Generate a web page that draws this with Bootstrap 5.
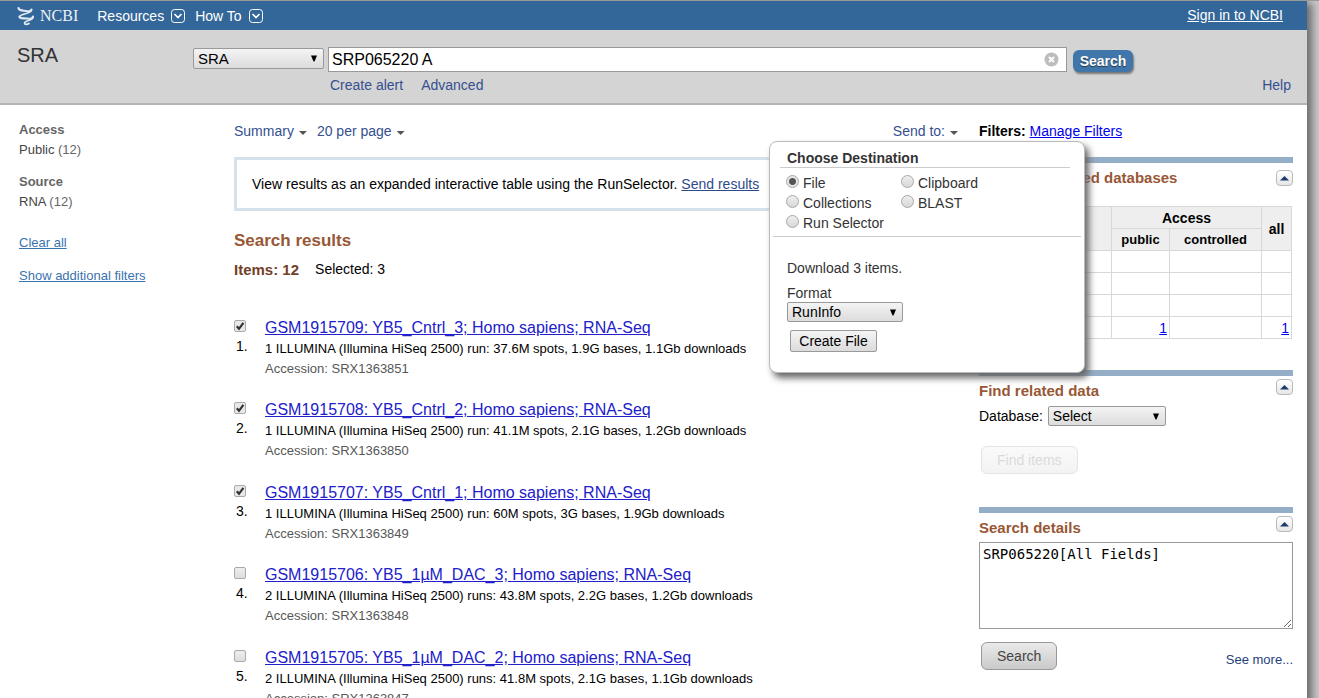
<!DOCTYPE html>
<html lang="en">
<head>
<meta charset="utf-8">
<meta name="viewport" content="width=device-width, initial-scale=1">
<title>SRP065220 A - SRA - NCBI</title>
<link href="https://cdn.jsdelivr.net/npm/bootstrap@5.3.0/dist/css/bootstrap.min.css" rel="stylesheet">
<style>
  body { background: #c8c8c8; border-top: 1px solid #999; font: 14px/20px "Liberation Sans", Arial, sans-serif; color: #000; height: 100vh; overflow: hidden; }
  .page { background: #fff; margin-right: 12px; min-height: 100%; box-shadow: 2px 5px 8px 3px #6a6a6a; }
  .topbar { background: #336699; height: 29px; padding: 0 24px 0 17px; color: #fff; }
  .topbar a, .topbar button { color: #fff; }
  .topbar a.brand { font: 16px/20px "Liberation Serif", serif; gap: 5px; color: #eef3f8; margin-right: 19px; }
  .topbar .signin { margin-top: -2px; }
  .plain { border: 0; background: none; padding: 0; color: inherit; font: inherit; }
  .topbar .plain { margin-right: 9px; }
  .topbar .plain svg { margin-left: 6px; }
  .searchband { background: #d4d4d4; height: 75px; padding: 0 16px 0 17px; border-bottom: 2px solid #b4b4b4; }
  .dbname { font-size: 20px; line-height: 24px; width: 176px; padding-top: 13px; color: #333; font-weight: 400; margin: 0; }
  .searchband a, .toolbar > button { color: #345090; text-decoration: none; }
  .searchrow { gap: 6px; margin-top: 17px; }
  .endgap { width: 152px; }
  .sublinks { margin-top: 3px; padding-left: 2px; gap: 18px; }
  .pick { appearance: none; border: 1px solid #999; border-radius: 2px; color: #000; padding: 0 5px 0 4px; height: 20px; font: 14px/18px "Liberation Sans", Arial, sans-serif;
    background: url("data:image/svg+xml,%3Csvg xmlns='http://www.w3.org/2000/svg' width='8' height='7'%3E%3Cpath d='M1 .5h6L4.500 6.500h-1z'/%3E%3C/svg%3E") no-repeat right 5px center, linear-gradient(#f4f4f4, #dcdcdc); }
  .pick-top { width: 131px; height: 21px; font-size: 15px; margin-top: 18px; }
  .term { height: 25px; border: 1px solid #999; border-radius: 0; padding: 0 28px 0 3px; font: 16px/20px "Liberation Sans", Arial, sans-serif; color: #000; }
  .clear { right: 8px; top: 5px; line-height: 0; }
  .go { background: #4076aa; color: #fff; font: bold 14px/20px "Liberation Sans", Arial, sans-serif; border: 0; border-radius: 6px; padding: 0; width: 60px; height: 22px; margin-top: 3px; box-shadow: 1px 2px 2px #777; text-shadow: 0 1px 1px #234; }
  .body-row { padding: 0 14px 0 17px; }
  .filters { width: 217px; padding: 15px 0 0 2px; font-size: 13px; color: #666; }
  .filters h2 { font-size: 13px; line-height: 20px; font-weight: 700; margin: 0; color: #666; }
  .filters ul { margin: 0 0 12px; }
  .filters ul a { color: #444; text-decoration: none; }
  .filters > a { color: #3b73af; display: block; }
  .filters > .first { margin-top: 21px; }
  .filters > .more { margin-top: 13px; }
  .maincol { padding-top: 16px; min-width: 0; }
  .toolbar { gap: 10px; }
  .caret { width: 8px; height: 4px; background: #555; clip-path: polygon(0 0, 100% 0, 50% 100%); margin: 4px 0 0 5px; }
  .notice { border: 3px solid #d6e2eb; margin: 16px -1px 0 0; padding: 14px 15px; white-space: nowrap; overflow: hidden; height: 54px; }
  .notice a { color: #2f4a8b; }
  .brown { color: #985735; font-weight: 700; margin: 0; }
  .brown-lg { font-size: 17px; line-height: 22px; margin-top: 19px; }
  .counts { margin-top: 7px; }
  .items { color: #724128; font-size: 15px; line-height: 22px; font-weight: 700; margin: 0 16px 0 0; }
  .hits { margin-top: 35px; }
  .hit { gap: 16px; margin-bottom: 19px; font-size: 13px; }
  .hit:nth-child(even) { margin-bottom: 20px; }
  .pos { width: 15px; padding-top: 4px; }
  .pos label { font-size: 14px; margin-top: 4px; padding-left: 2px; }
  .hit a { font-size: 16px; line-height: 23px; color: #2120cb; display: block; }
  .acc { color: #575757; }
  .tick.form-check-input { width: 12px; height: 12px; margin: 0; border: 1px solid #aaa; border-radius: 2px; background: linear-gradient(#eee, #ddd); float: none; display: block; }
  .tick.form-check-input:checked { background: url("data:image/svg+xml,%3Csvg xmlns='http://www.w3.org/2000/svg' width='10' height='10'%3E%3Cpath d='M1.800 5.200 4 7.800 8.400 1.800' fill='none' stroke='%23333' stroke-width='2.200'/%3E%3C/svg%3E") center no-repeat, #e8e8e8; }
  .dot.form-check-input { width: 13px; height: 13px; margin: 2px 4px 0 0; border: 1px solid #a8a8a8; background: linear-gradient(#eee, #d8d8d8); float: none; flex: none; }
  .dot.form-check-input:checked { background: radial-gradient(circle, #555 0 3px, #e6e6e6 4px); }
  .sendbox { width: 316px; height: 232px; right: -127px; top: 20px; background: #fff; border: 1px solid #bbb; border-radius: 8px; box-shadow: 4px 5px 7px #666; z-index: 5; color: #333; }
  .sendbox h3 { font-size: 14px; line-height: 20px; font-weight: 700; margin: 6px 14px 0 10px; padding: 0 7px 0; height: 20px; border-bottom: 1px solid #ccc; }
  .dest { display: grid; grid-template-columns: 115px 1fr; align-content: start; padding: 5px 16px 0 13px; height: 69px; border-bottom: 1px solid #ccc; margin: 0 3px; }
  .choices { padding: 21px 17px 0; }
  .choices p { margin: 0 0 5px; }
  #format { width: 116px; margin-top: -1px; }
  .make { border: 1px solid #999; border-radius: 2px; background: linear-gradient(#f4f4f4, #dcdcdc); color: #000; padding: 0; width: 87px; height: 22px; margin: 8px 0 0 3px; }
  .rightcol { width: 314px; padding-top: 16px; margin-left: 21px; flex: none; }
  .manage { color: #0000ee; }
  .portlet { border-top: 6px solid #94aec7; padding-top: 3px; }
  .portlet h2 { font-size: 15px; line-height: 20px; padding-top: 2px; }
  .fold { width: 17px; height: 16px; border: 1px solid #bbb; border-radius: 4px; background: linear-gradient(#fff, #e6e6e6); padding: 0; line-height: 0; }
  .links { width: 313px; table-layout: fixed; border-collapse: collapse; margin: 18px 0 31px; }
  .links th, .links td { border: 1px solid #d8d8d8; height: 22px; padding: 0 2px; line-height: 20px; }
  .links th { background: #eee; text-align: center; font-weight: 700; }
  .links .sub th { font-size: 13px; }
  .links td { text-align: right; }
  .related { margin-top: 5px; gap: 5px; }
  #reldb { width: 118px; }
  .soft { border: 1px solid #999; border-radius: 6px; background: linear-gradient(#eaeaea, #cacaca); color: #444; height: 28px; padding: 0 15px; margin-left: 2px; }
  .soft:disabled { border-color: #e4e4e4; background: linear-gradient(#fafafa, #f3f3f3); color: #dadada; }
  .find { margin: 20px 0 33px 2px; }
  .query { height: 87px; border: 1px solid #999; border-radius: 0; padding: 3px; font: 14px/17px "DejaVu Sans Mono", monospace; color: #000; display: block; width: 100%; margin-top: 4px; }
  .actions { margin-top: 13px; }
  .see { font-size: 13px; color: #1f3f7a; text-decoration: none; }
</style>
<script src="https://cdn.jsdelivr.net/npm/bootstrap@5.3.0/dist/js/bootstrap.bundle.min.js"></script>
</head>
<body>
<div class="page">
  <header>
    <nav class="topbar d-flex align-items-center">
      <a class="brand d-flex align-items-center text-decoration-none" href="#">
        <svg width="18" height="20" viewBox="0 0 18 20" fill="none" stroke="#dfe9f2" stroke-linecap="round"><path d="M1.500 2C2 5 6 4.500 9 5s5 .8 5.500-1.500" stroke-width="2.200"/><path d="M14.500 4C14.500 8 3 7.500 2.500 11" stroke-width="1.500"/><path d="M2.500 10.500C2.500 13 6 12 10 12.500s5.500.5 6-2" stroke-width="2.200"/><path d="M16 11c0 4-8 3-8.500 6 0 2 3 1.500 4.500.5" stroke-width="1.700"/></svg>
        <span>NCBI</span>
      </a>
      <button class="plain d-flex align-items-center" type="button">Resources
        <svg width="16" height="16" viewBox="0 0 16 16" fill="none" stroke="#fff"><rect x="1.500" y="1.500" width="13" height="13" rx="3"/><path d="m4.500 6 3.500 3.500L11.500 6" stroke-width="1.600"/></svg></button>
      <button class="plain d-flex align-items-center" type="button">How To
        <svg width="16" height="16" viewBox="0 0 16 16" fill="none" stroke="#fff"><rect x="1.500" y="1.500" width="13" height="13" rx="3"/><path d="m4.500 6 3.500 3.500L11.500 6" stroke-width="1.600"/></svg></button>
      <a class="signin ms-auto" href="#">Sign in to NCBI</a>
    </nav>
    <form class="searchband d-flex">
      <h1 class="dbname">SRA</h1>
      <select class="pick pick-top" aria-label="Database to search"><option>SRA</option></select>
      <div class="flex-grow-1 ms-1">
        <div class="searchrow d-flex">
          <div class="position-relative flex-grow-1">
            <input class="term w-100 d-block" type="text" value="SRP065220 A" aria-label="Search term">
            <button class="plain clear position-absolute" type="button" aria-label="Clear"><svg width="15" height="15" viewBox="0 0 15 15"><circle cx="7.500" cy="7.500" r="7" fill="#bdbdbd"/><path d="m5 5 5 5m0-5-5 5" stroke="#fff" stroke-width="2"/></svg></button>
          </div>
          <button class="go" type="submit">Search</button>
          <span class="endgap"></span>
        </div>
        <div class="d-flex sublinks"><a href="#">Create alert</a><a href="#">Advanced</a><a href="#" class="ms-auto">Help</a></div>
      </div>
    </form>
  </header>
  <div class="d-flex body-row">
    <aside class="filters flex-shrink-0">
      <h2>Access</h2>
      <ul class="list-unstyled"><li><a href="#">Public</a> (12)</li></ul>
      <h2>Source</h2>
      <ul class="list-unstyled"><li><a href="#">RNA</a> (12)</li></ul>
      <a class="first" href="#">Clear all</a>
      <a class="more" href="#">Show additional filters</a>
    </aside>
    <main class="maincol flex-grow-1">
      <div class="toolbar d-flex position-relative">
        <button class="plain d-flex align-items-center" type="button">Summary<span class="caret"></span></button>
        <button class="plain d-flex align-items-center" type="button">20 per page<span class="caret"></span></button>
        <button class="plain d-flex align-items-center ms-auto" type="button">Send to: <span class="caret"></span></button>
        <form class="sendbox position-absolute">
          <h3>Choose Destination</h3>
          <div class="dest">
            <label class="d-flex"><input class="form-check-input dot" type="radio" name="dest" checked>File</label>
            <label class="d-flex"><input class="form-check-input dot" type="radio" name="dest">Clipboard</label>
            <label class="d-flex"><input class="form-check-input dot" type="radio" name="dest">Collections</label>
            <label class="d-flex"><input class="form-check-input dot" type="radio" name="dest">BLAST</label>
            <label class="d-flex"><input class="form-check-input dot" type="radio" name="dest">Run Selector</label>
          </div>
          <div class="choices">
            <p>Download 3 items.</p>
            <label class="d-block" for="format">Format</label>
            <select class="pick d-block" id="format"><option>RunInfo</option></select>
            <button class="make" type="button">Create File</button>
          </div>
        </form>
      </div>
      <div class="notice">View results as an expanded interactive table using the RunSelector. <a href="#">Send results</a></div>
      <h2 class="brown brown-lg">Search results</h2>
      <div class="d-flex counts"><h3 class="items">Items: 12</h3><span>Selected: 3</span></div>
      <div class="hits">
        <article class="hit d-flex"><div class="pos"><input class="form-check-input tick" type="checkbox" id="h1" checked><label for="h1">1.</label></div>
          <div><a href="#">GSM1915709: YB5_Cntrl_3; Homo sapiens; RNA-Seq</a><div>1 ILLUMINA (Illumina HiSeq 2500) run: 37.6M spots, 1.9G bases, 1.1Gb downloads</div><div class="acc">Accession: SRX1363851</div></div></article>
        <article class="hit d-flex"><div class="pos"><input class="form-check-input tick" type="checkbox" id="h2" checked><label for="h2">2.</label></div>
          <div><a href="#">GSM1915708: YB5_Cntrl_2; Homo sapiens; RNA-Seq</a><div>1 ILLUMINA (Illumina HiSeq 2500) run: 41.1M spots, 2.1G bases, 1.2Gb downloads</div><div class="acc">Accession: SRX1363850</div></div></article>
        <article class="hit d-flex"><div class="pos"><input class="form-check-input tick" type="checkbox" id="h3" checked><label for="h3">3.</label></div>
          <div><a href="#">GSM1915707: YB5_Cntrl_1; Homo sapiens; RNA-Seq</a><div>1 ILLUMINA (Illumina HiSeq 2500) run: 60M spots, 3G bases, 1.9Gb downloads</div><div class="acc">Accession: SRX1363849</div></div></article>
        <article class="hit d-flex"><div class="pos"><input class="form-check-input tick" type="checkbox" id="h4"><label for="h4">4.</label></div>
          <div><a href="#">GSM1915706: YB5_1µM_DAC_3; Homo sapiens; RNA-Seq</a><div>2 ILLUMINA (Illumina HiSeq 2500) runs: 43.8M spots, 2.2G bases, 1.2Gb downloads</div><div class="acc">Accession: SRX1363848</div></div></article>
        <article class="hit d-flex"><div class="pos"><input class="form-check-input tick" type="checkbox" id="h5"><label for="h5">5.</label></div>
          <div><a href="#">GSM1915705: YB5_1µM_DAC_2; Homo sapiens; RNA-Seq</a><div>2 ILLUMINA (Illumina HiSeq 2500) runs: 41.8M spots, 2.1G bases, 1.1Gb downloads</div><div class="acc">Accession: SRX1363847</div></div></article>
      </div>
    </main>
    <aside class="rightcol">
      <div class="mb-3"><b>Filters:</b> <a class="manage" href="#">Manage Filters</a></div>
      <section class="portlet">
        <div class="d-flex justify-content-between align-items-start"><h2 class="brown">Search in related databases</h2>
          <button class="fold mt-1" type="button" aria-label="Collapse"><svg width="11" height="6" viewBox="0 0 11 6"><path d="M1 5.500 5.500 1 10 5.500z" fill="#1c3a6e"/></svg></button></div>
        <table class="links">
          <colgroup><col><col style="width:58px"><col style="width:92px"><col style="width:30px"></colgroup>
          <tr><th rowspan="2"></th><th colspan="2">Access</th><th rowspan="2">all</th></tr>
          <tr class="sub"><th>public</th><th>controlled</th></tr>
          <tr><td></td><td></td><td></td><td></td></tr>
          <tr><td></td><td></td><td></td><td></td></tr>
          <tr><td></td><td></td><td></td><td></td></tr>
          <tr><td></td><td><a class="manage" href="#">1</a></td><td></td><td><a class="manage" href="#">1</a></td></tr>
        </table>
      </section>
      <section class="portlet">
        <div class="d-flex justify-content-between align-items-start"><h2 class="brown">Find related data</h2>
          <button class="fold" type="button" aria-label="Collapse"><svg width="11" height="6" viewBox="0 0 11 6"><path d="M1 5.500 5.500 1 10 5.500z" fill="#1c3a6e"/></svg></button></div>
        <div class="d-flex related"><label for="reldb">Database:</label><select class="pick" id="reldb"><option>Select</option></select></div>
        <button class="soft find" type="button" disabled>Find items</button>
      </section>
      <section class="portlet">
        <div class="d-flex justify-content-between align-items-start"><h2 class="brown">Search details</h2>
          <button class="fold" type="button" aria-label="Collapse"><svg width="11" height="6" viewBox="0 0 11 6"><path d="M1 5.500 5.500 1 10 5.500z" fill="#1c3a6e"/></svg></button></div>
        <textarea class="query" aria-label="Search details">SRP065220[All Fields]</textarea>
        <div class="d-flex justify-content-between align-items-end actions"><button class="soft" type="button">Search</button><a class="see" href="#">See more...</a></div>
      </section>
    </aside>
  </div>
</div>
</body>
</html>
